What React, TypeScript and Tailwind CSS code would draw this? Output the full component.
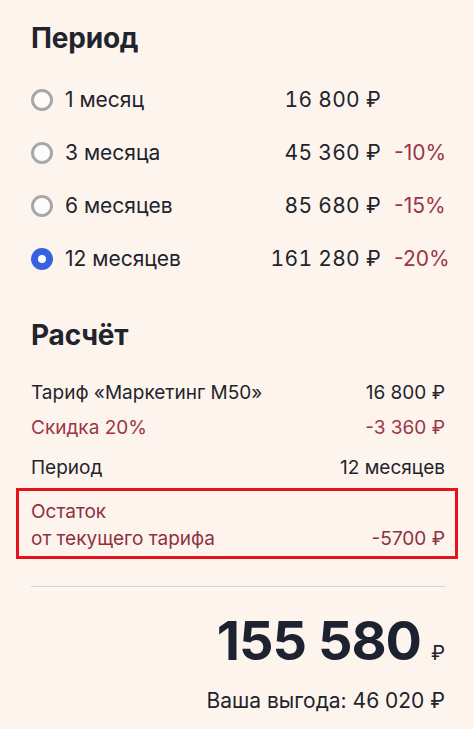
import { useState } from "react";

const periods = [
  { label: "1 месяц", price: "16 800 ₽", discount: "" },
  { label: "3 месяца", price: "45 360 ₽", discount: "-10%" },
  { label: "6 месяцев", price: "85 680 ₽", discount: "-15%" },
  { label: "12 месяцев", price: "161 280 ₽", discount: "-20%" },
];

function Radio({ checked }: { checked: boolean }) {
  if (checked) {
    return (
      <span className="flex h-[22px] w-[22px] shrink-0 items-center justify-center rounded-full bg-[#3563e0]">
        <span className="h-[8px] w-[8px] rounded-full bg-white" />
      </span>
    );
  }
  return (
    <span className="h-[22px] w-[22px] shrink-0 rounded-full border-[3px] border-[#a7a7aa] bg-[#fdfcfb]" />
  );
}

export default function App() {
  const [selected, setSelected] = useState(3);

  return (
    <div
      className="min-h-[729px] w-[474px] bg-[#fdf5ed] text-[#1f242d]"
      style={{ fontFamily: "Inter, 'Noto Sans', sans-serif" }}
    >
      <div className="pl-[31px] pr-[29px] pt-[20px] pb-[20px]">
        <h2 className="text-[28px] font-bold leading-[36px] tracking-[-0.2px]">Период</h2>

        <div className="mt-[28px] flex flex-col gap-[21px]">
          {periods.map((p, i) => (
            <button
              key={p.label}
              onClick={() => setSelected(i)}
              className="flex h-[32px] items-center text-left text-[21px] leading-[32px]"
            >
              <Radio checked={selected === i} />
              <span className="ml-[12px] flex-1">{p.label}</span>
              <span className="tabular-nums tracking-[0.3px]">{p.price}</span>
              <span className="ml-[13px] w-[51px] text-[#9b3547]">{p.discount}</span>
            </button>
          ))}
        </div>

        <h2 className="mt-[42px] text-[28px] font-bold leading-[36px] tracking-[-0.2px]">Расчёт</h2>

        <div className="mt-[27px] flex flex-col text-[19px] leading-[26px]">
          <div className="flex justify-between">
            <span>Тариф «Маркетинг М50»</span>
            <span>16 800 ₽</span>
          </div>
          <div className="mt-[9px] flex justify-between text-[#9b3547]">
            <span>Скидка 20%</span>
            <span>-3 360 ₽</span>
          </div>
          <div className="mt-[14px] flex justify-between">
            <span>Период</span>
            <span>12 месяцев</span>
          </div>
        </div>

        <div className="ml-[-15px] mr-[-13px] mt-[7px] flex items-end justify-between border-[3px] border-[#e3141b] pl-[12px] pr-[10px] pt-[7px] pb-[4px] text-[19px] leading-[27px] text-[#8f3042]">
          <span>
            Остаток
            <br />
            от текущего тарифа
          </span>
          <span>-5700 ₽</span>
        </div>

        <div className="mt-[27px] h-px bg-[#d6d2d2]" />

        <div className="mt-[22px] flex items-baseline justify-end">
          <span className="text-[54px] font-bold leading-[64px] tracking-[-1px] text-[#1c2230]">155 580</span>
          <span className="ml-[10px] text-[20px]">₽</span>
        </div>
        <div className="mt-[14px] text-right text-[21px] leading-[28px]">Ваша выгода: 46 020 ₽</div>
      </div>
    </div>
  );
}
